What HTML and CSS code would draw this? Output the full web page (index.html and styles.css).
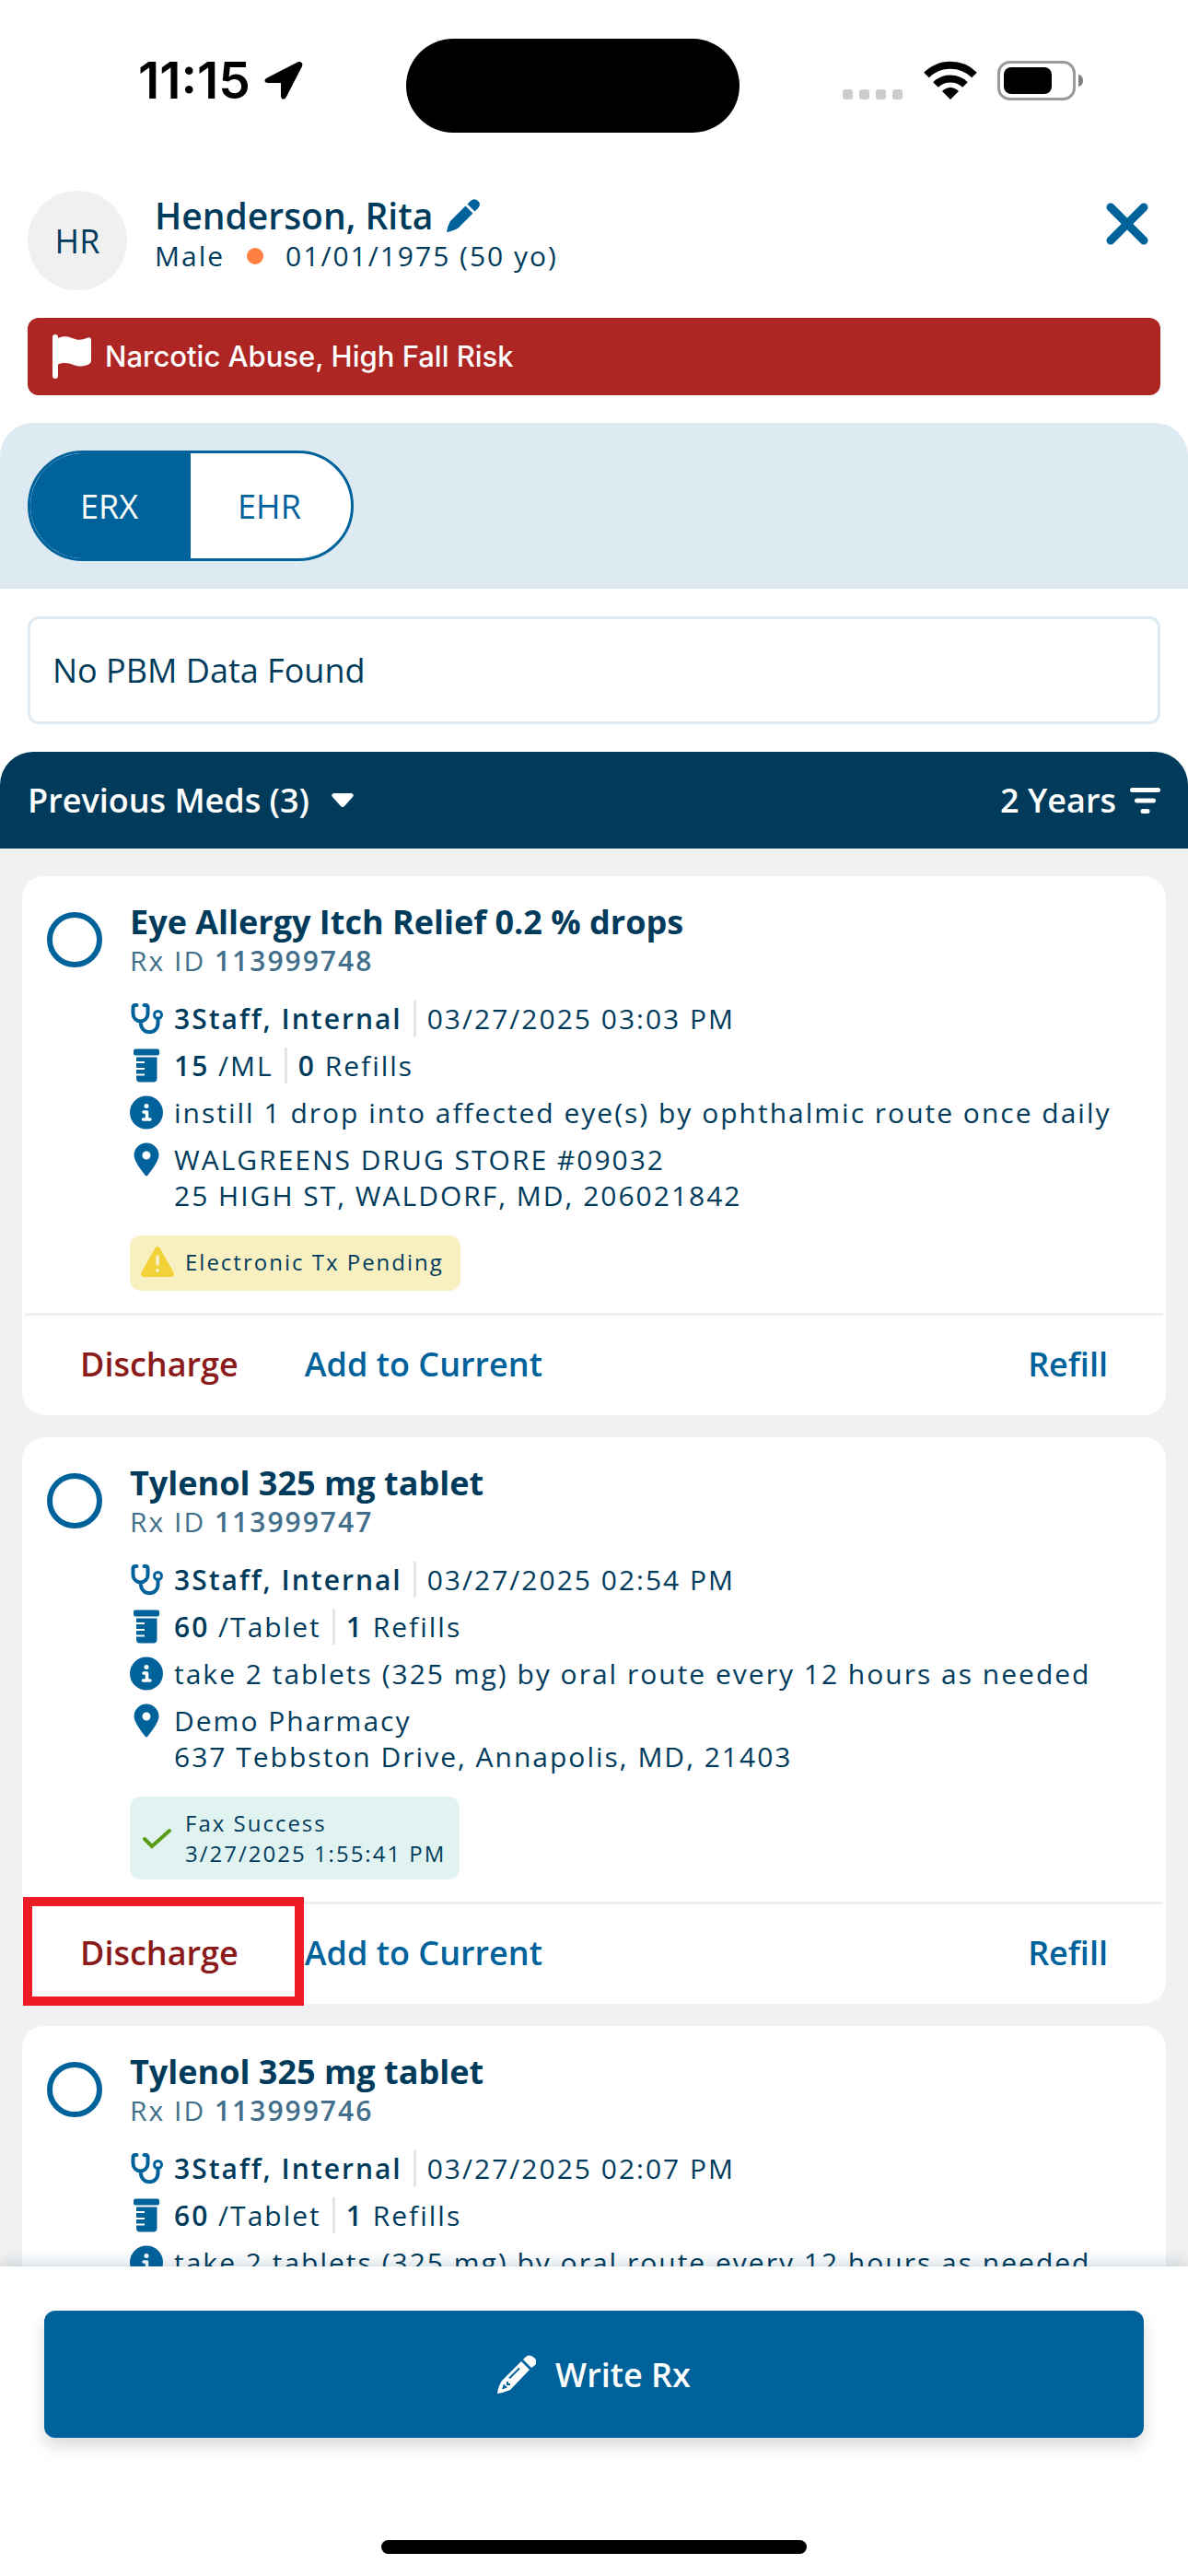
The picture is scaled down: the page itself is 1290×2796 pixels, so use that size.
FILE: index.html
```
<!DOCTYPE html>
<html lang="en">
<head>
  <meta charset="UTF-8" />
  <meta name="viewport" content="width=device-width, initial-scale=1.0" />
  <title>Patient Medications</title>
  <link rel="stylesheet" href="styles.css">
</head>
<body>
  <!-- shared icons -->
  <svg class="sprite" aria-hidden="true">
    <symbol id="stethoscope" viewBox="0 0 36 36">
      <path d="M7.500 3.500H6Q3.500 3.500 3.500 6V13A8 8 0 0 0 19.500 13V6Q19.500 3.500 17 3.500H15.500M12 21.500V23.500A9 9 0 0 0 30.500 23.500V18" fill="none" stroke="currentColor" stroke-width="4" stroke-linecap="round" />
      <circle cx="30.500" cy="14" r="4" fill="none" stroke="currentColor" stroke-width="3" />
    </symbol>
    <symbol id="bottle" viewBox="0 0 36 36">
      <rect x="4" y="0" width="28" height="7" rx="2" />
      <path d="M7 9H29.500V32Q29.500 36 25.500 36H11Q7 36 7 32V29H16V27H7V22.500H16V20.500H7V15.500H16V13.500H7Z" />
    </symbol>
    <symbol id="info" viewBox="0 0 36 36">
      <circle cx="18" cy="18" r="18" />
      <circle cx="18" cy="11" r="2.500" fill="#fff" />
      <path d="M15 17.500H18.500V25M14.500 25.500H22" fill="none" stroke="#fff" stroke-width="3.500" stroke-linecap="round" stroke-linejoin="round" />
    </symbol>
    <symbol id="pin" viewBox="0 0 36 36">
      <path fill-rule="evenodd" d="M18 0A13.500 13.500 0 0 0 4.500 13.500C4.500 19 11 28 16.500 35Q18 37 19.500 35C25 28 31.500 19 31.500 13.500A13.500 13.500 0 0 0 18 0ZM18 9A4.500 4.500 0 1 1 18 18A4.500 4.500 0 0 1 18 9Z" />
    </symbol>
  </svg>

  <div class="status-bar">
    <div class="clock">
      <span>11:15</span>
      <svg width="42" height="42" viewBox="0 0 42 42"><path d="M36 1.500 3 18.500C-1 20.500 0 24 4 24H18V38C18 42.500 22 43 24 39L41 6C42.500 2.500 39.500 0 36 1.500Z" /></svg>
    </div>
    <div class="island"></div>
    <div class="signals">
      <svg class="cell" width="66" height="42" viewBox="0 0 66 42">
        <rect x="0" y="31" width="11" height="11" rx="3" />
        <rect x="18" y="31" width="11" height="11" rx="3" />
        <rect x="36" y="31" width="11" height="11" rx="3" />
        <rect x="54" y="31" width="11" height="11" rx="3" />
      </svg>
      <svg class="wifi" width="58" height="42" viewBox="0 0 58 42">
        <path d="M3 15.500A37 37 0 0 1 55 15.500M13 26A23 23 0 0 1 45 26" fill="none" stroke="#000" stroke-width="8" />
        <path d="M29 42 20 33Q29 25 38 33Z" />
      </svg>
      <svg width="94" height="43" viewBox="0 0 94 43">
        <rect x="1.500" y="1.500" width="82" height="40" rx="12" fill="none" stroke="#999" stroke-width="3" />
        <rect x="7" y="7" width="52" height="29" rx="8" />
        <path d="M88 15Q93 16 93 21.500T88 28Z" fill="#808080" />
      </svg>
    </div>
  </div>

  <header class="patient">
    <div class="avatar">HR</div>
    <div class="patient-info">
      <h1>Henderson, Rita
        <svg width="36" height="36" viewBox="0 0 36 36"><path d="M20.500 7.500 28.500 15.500 12 32Q6 35 0 36 1 29 4 24ZM22.500 5.500 26 2Q30 -1.500 34 2T34 10L30.500 13.500Z" /></svg>
      </h1>
      <p><span>Male</span><i class="dot"></i><span>01/01/1975 (50 yo)</span></p>
    </div>
    <button class="close-btn" aria-label="Close">
      <svg width="48" height="48" viewBox="0 0 48 48"><path d="M6 6 42 42M42 6 6 42" fill="none" stroke="currentColor" stroke-width="9" stroke-linecap="round" /></svg>
    </button>
  </header>

  <div class="alert">
    <svg width="42" height="48" viewBox="0 0 42 48"><path d="M0 3A3 3 0 0 1 6 3V4C15 0 20 4 26 5.500 31 6.500 35 5 38.500 3.500 40.500 3 42 4 42 6V28C42 32 38 34 31 34.500 23 35 17 28 6 32.500V45A3 3 0 0 1 0 45Z" /></svg>
    <span>Narcotic Abuse, High Fall Risk</span>
  </div>

  <div class="source-band">
    <div class="toggle">
      <button class="active">ERX</button>
      <button>EHR</button>
    </div>
  </div>

  <div class="pbm">No PBM Data Found</div>

  <div class="meds-bar">
    <button>Previous Meds (3)
      <svg class="caret" width="24" height="15" viewBox="0 0 24 15"><path d="M2.500 0H21.500Q25 1 23 4L14 14Q12 16 10 14L1 4Q-1 1 2.500 0Z" /></svg>
    </button>
    <button>2 Years
      <svg width="33" height="28" viewBox="0 0 33 28"><path d="M2.500 2.500H30.500M7.500 14H25.500M14 25.500H19" fill="none" stroke="#fff" stroke-width="5" stroke-linecap="round" /></svg>
    </button>
  </div>

  <main class="meds">
    <article class="card">
      <div class="card-body">
        <input type="checkbox" class="pick" aria-label="Select Eye Allergy Itch Relief 0.2 % drops" />
        <div class="details">
          <h2>Eye Allergy Itch Relief 0.2 % drops</h2>
          <p class="rx-id">Rx ID <b>113999748</b></p>
          <ul>
            <li><svg><use href="#stethoscope" /></svg><b>3Staff, Internal</b><span class="next">03/27/2025 03:03 PM</span></li>
            <li><svg><use href="#bottle" /></svg><span><b>15</b> /ML</span><span class="next"><b>0</b> Refills</span></li>
            <li><svg><use href="#info" /></svg><span>instill 1 drop into affected eye(s) by ophthalmic route once daily</span></li>
            <li><svg><use href="#pin" /></svg><span>WALGREENS DRUG STORE #09032<br>25 HIGH ST, WALDORF, MD, 206021842</span></li>
          </ul>
          <div class="badge pending">
            <svg width="36" height="33" viewBox="0 0 36 33">
              <path d="M15.500 1.500Q18 -1.500 20.500 1.500L35.500 28Q37 32 33 33H3Q-1 32 .5 28Z" fill="#f1d238" />
              <path d="M18 11V19M18 26V26.100" stroke="#f9f0c2" stroke-width="4" stroke-linecap="round" />
            </svg>
            <span>Electronic Tx Pending</span>
          </div>
        </div>
      </div>
      <div class="actions">
        <button class="discharge">Discharge</button>
        <button>Add to Current</button>
        <button class="refill">Refill</button>
      </div>
    </article>

    <article class="card">
      <div class="card-body">
        <input type="checkbox" class="pick" aria-label="Select Tylenol 325 mg tablet" />
        <div class="details">
          <h2>Tylenol 325 mg tablet</h2>
          <p class="rx-id">Rx ID <b>113999747</b></p>
          <ul>
            <li><svg><use href="#stethoscope" /></svg><b>3Staff, Internal</b><span class="next">03/27/2025 02:54 PM</span></li>
            <li><svg><use href="#bottle" /></svg><span><b>60</b> /Tablet</span><span class="next"><b>1</b> Refills</span></li>
            <li><svg><use href="#info" /></svg><span>take 2 tablets (325 mg) by oral route every 12 hours as needed</span></li>
            <li><svg><use href="#pin" /></svg><span>Demo Pharmacy<br>637 Tebbston Drive, Annapolis, MD, 21403</span></li>
          </ul>
          <div class="badge success">
            <svg width="36" height="33" viewBox="0 0 36 33"><path d="M4 17 12 25 31 8" fill="none" stroke="#5a9c16" stroke-width="4" stroke-linecap="round" /></svg>
            <span>Fax Success<br>3/27/2025 1:55:41 PM</span>
          </div>
        </div>
      </div>
      <div class="actions">
        <button class="discharge">Discharge</button>
        <button>Add to Current</button>
        <button class="refill">Refill</button>
        <span class="callout"></span>
      </div>
    </article>

    <article class="card">
      <div class="card-body">
        <input type="checkbox" class="pick" aria-label="Select Tylenol 325 mg tablet" />
        <div class="details">
          <h2>Tylenol 325 mg tablet</h2>
          <p class="rx-id">Rx ID <b>113999746</b></p>
          <ul>
            <li><svg><use href="#stethoscope" /></svg><b>3Staff, Internal</b><span class="next">03/27/2025 02:07 PM</span></li>
            <li><svg><use href="#bottle" /></svg><span><b>60</b> /Tablet</span><span class="next"><b>1</b> Refills</span></li>
            <li><svg><use href="#info" /></svg><span>take 2 tablets (325 mg) by oral route every 12 hours as needed</span></li>
          </ul>
        </div>
      </div>
    </article>
  </main>

  <footer>
    <button class="write-btn">
      <svg width="42" height="42" viewBox="0 0 42 42">
        <path d="M26 7 35 16 14 38Q7 41 0 42 1 34 5 28ZM28 5 31 2Q35 -1.500 40 3T40 12L37 14Z" />
        <path d="M24 14.500 13 25.500M11 29V32H14" fill="none" stroke="#00629b" stroke-width="2" />
        <path d="M7 31.500 11 35.500 5 37.500Z" fill="#00629b" />
      </svg>
      Write Rx
    </button>
    <div class="home-bar"></div>
  </footer>
</body>
</html>
```
FILE: styles.css
```
* { box-sizing: border-box; margin: 0; padding: 0; }
body {
  font-family: "Open Sans", "Noto Sans", sans-serif; font-size: 30px; line-height: 39px;
  color: #003b5c; background: #fff;
  height: 100vh; display: flex; flex-direction: column; overflow: hidden;
}
svg { display: block; flex: none; fill: currentColor; }
b { font-weight: 600; }
button {
  font: inherit; color: inherit; background: none; border: none; cursor: pointer;
}
.sprite { position: absolute; width: 0; height: 0; }

/* phone status bar */
.status-bar {
  display: flex; justify-content: space-between; align-items: center;
  padding: 42px 113px 63px 150px; color: #000; flex: none;
}
.clock {
  display: flex; align-items: center; gap: 15px; margin-bottom: 12px;
  font: 600 55px/60px Inter, sans-serif;
}
.island { width: 362px; height: 102px; border-radius: 51px; background: #000; }
.signals { display: flex; align-items: center; margin-bottom: 12px; }
.cell { fill: #ccc; }
.wifi { margin: 0 22px; }

/* patient header */
.patient { display: flex; gap: 30px; padding: 0 42px 0 30px; }
.avatar {
  width: 108px; height: 108px; border-radius: 50%; background: #f0f0f0;
  display: flex; align-items: center; justify-content: center; font-size: 36px;
}
.patient-info { flex: 1; padding-top: 3px; }
.patient-info h1 {
  display: flex; align-items: center; gap: 15px;
  font-size: 39px; font-weight: 600; line-height: 48px;
}
.patient-info svg { color: #00629b; }
.patient-info p { display: flex; align-items: center; letter-spacing: 2px; }
.dot { width: 18px; height: 18px; border-radius: 50%; background: #ff8040; margin: 0 24px; }
.close-btn { color: #00629b; align-self: flex-start; margin-top: 12px; }

.alert {
  display: flex; align-items: center; gap: 15px;
  margin: 30px 30px 0; padding: 18px 27px; border-radius: 12px;
  background: #ae2624; color: #fff; font: 500 31px/48px Inter, sans-serif;
}

.source-band { background: #deeaf2; margin-top: 30px; padding: 30px; border-radius: 36px 36px 0 0; }
.toggle {
  display: inline-flex; vertical-align: top; width: 354px; height: 120px; overflow: hidden;
  border: 3px solid #00629b; border-radius: 60px; background: #fff;
}
.toggle button { flex: 1; font-size: 36px; color: #00629b; padding-right: 3px; }
.toggle .active { background: #00629b; color: #fff; }

.pbm {
  margin: 30px; padding: 33px 24px; border: 3px solid #deeaf2; border-radius: 12px;
  font-size: 36px; line-height: 45px;
}

.meds-bar {
  display: flex; justify-content: space-between; padding: 30px; flex: none;
  background: #003b5c; color: #fff; border-radius: 36px 36px 0 0;
}
.meds-bar button {
  display: flex; align-items: center; gap: 15px;
  font-size: 36px; font-weight: 600; line-height: 45px;
}
.caret { margin-left: 9px; }

/* medication list */
.meds {
  flex: 1; min-height: 0; overflow: hidden; background: #f1f1f1;
  padding: 30px 24px 0; display: flex; flex-direction: column; gap: 24px;
}
.card { background: #fff; border-radius: 24px; flex: none; }
.card-body { display: flex; gap: 30px; padding: 27px 27px 24px; }
.pick {
  appearance: none; width: 60px; height: 60px; margin-top: 12px; flex: none;
  border: 6px solid #00629b; border-radius: 50%;
}
.details { flex: 1; letter-spacing: 2px; }
.details h2 { font-size: 36px; font-weight: 700; line-height: 45px; letter-spacing: normal; }
.rx-id { color: #426f8b; }
.details ul { list-style: none; display: flex; flex-direction: column; gap: 12px; margin-top: 24px; }
.details li { display: flex; align-items: flex-start; }
.details li svg { width: 36px; height: 39px; margin-right: 12px; color: #00629b; }
.next { border-left: 3px solid #e5e5e5; margin-left: 12px; padding-left: 12px; }

.badge {
  display: inline-flex; vertical-align: top; align-items: center; gap: 12px;
  margin-top: 24px; padding: 12px 15px 12px 12px; border-radius: 12px;
  font-size: 24px; line-height: 33px;
}
.pending { background: #f9f0c2; padding: 12px 18px 15px 12px; }
.success { background: #e0f3f1; }

.actions {
  display: flex; gap: 72px; margin: 0 3px; padding: 0 60px 3px; position: relative;
  border-top: 3px solid #efefef;
}
.actions button { height: 105px; font-size: 36px; font-weight: 600; color: #00629b; }
.actions .discharge { color: #8b1a1a; }
.actions .refill { margin-left: auto; }
/* red frame over the discharge action */
.callout {
  position: absolute; top: -8px; bottom: -2px; left: -2px; width: 305px;
  border: 10px solid #ed1c24; pointer-events: none;
}

footer {
  position: relative; background: #fff; padding: 48px 48px 24px; flex: none;
  box-shadow: 0 0 18px rgba(0, 59, 92, 0.25);
}
.write-btn {
  width: 100%; height: 138px; border-radius: 12px; background: #00629b; color: #fff;
  display: flex; align-items: center; justify-content: center; gap: 21px;
  font-size: 36px; font-weight: 600; box-shadow: 0 9px 18px rgba(0, 0, 0, 0.15);
}
.home-bar { width: 462px; height: 15px; border-radius: 8px; background: #000; margin: 111px auto 0; }
```
